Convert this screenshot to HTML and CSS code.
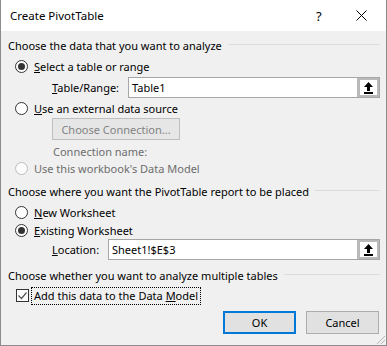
FILE: index.html
```html
<!DOCTYPE html>
<html lang="en">
<head>
    <meta charset="UTF-8">
    <title>Create PivotTable</title>
    <link rel="stylesheet" href="styles.css">
</head>
<body>

    <div class="dialog">

        <!-- Title bar -->
        <div class="titlebar">
            <span class="title">Create PivotTable</span>
            <span class="help">?</span>
            <span class="close">
                <svg width="11" height="11" viewBox="0 0 11 11"><path d="M0.5 0.5 L10.5 10.5 M10.5 0.5 L0.5 10.5" stroke="#000" stroke-width="1"/></svg>
            </span>
        </div>

        <div class="content">

            <!-- Source -->
            <div class="group-title g1">Choose the data that you want to analyze</div>

            <div class="option r1">
                <span class="radio checked"></span>
                <span><u>S</u>elect a table or range</span>
            </div>

            <div class="field f1">
                <span class="label"><u>T</u>able/Range:</span>
                <div class="input">
                    <span class="value">Table1</span>
                    <span class="picker">
                        <svg width="11" height="12" viewBox="0 0 11 12"><path d="M5.5 0 L10 5 L7 5 L7 9 L4 9 L4 5 L1 5 Z" fill="#000"/><rect x="1" y="10" width="9" height="2" fill="#000"/></svg>
                    </span>
                </div>
            </div>

            <div class="option r2">
                <span class="radio"></span>
                <span><u>U</u>se an external data source</span>
            </div>

            <div class="connect-row">
                <span class="btn disabled">Choose Connection...</span>
            </div>

            <div class="conn-name">Connection name:</div>

            <div class="option r3 muted">
                <span class="radio disabled"></span>
                <span>Use this workbook's Data Model</span>
            </div>

            <!-- Destination -->
            <div class="group-title g2">Choose where you want the PivotTable report to be placed</div>

            <div class="option r4">
                <span class="radio"></span>
                <span><u>N</u>ew Worksheet</span>
            </div>

            <div class="option r5">
                <span class="radio checked"></span>
                <span><u>E</u>xisting Worksheet</span>
            </div>

            <div class="field f2">
                <span class="label"><u>L</u>ocation:</span>
                <div class="input">
                    <span class="value">Sheet1!$E$3</span>
                    <span class="picker">
                        <svg width="11" height="12" viewBox="0 0 11 12"><path d="M5.5 0 L10 5 L7 5 L7 9 L4 9 L4 5 L1 5 Z" fill="#000"/><rect x="1" y="10" width="9" height="2" fill="#000"/></svg>
                    </span>
                </div>
            </div>

            <!-- Multiple tables -->
            <div class="group-title g3">Choose whether you want to analyze multiple tables</div>

            <div class="option r6">
                <span class="checkbox">
                    <svg width="11" height="11" viewBox="0 0 11 11"><path d="M1.5 5.5 L4.5 8.5 L9.5 2.5" fill="none" stroke="#555" stroke-width="1.2"/></svg>
                </span>
                <span class="focus">Add this data to the Data <u>M</u>odel</span>
            </div>

            <div class="actions">
                <span class="btn default">OK</span>
                <span class="btn">Cancel</span>
            </div>
        </div>

        <div class="grip"></div>
    </div>

</body>
</html>
```

FILE: styles.css
```css
* {
    margin: 0;
    padding: 0;
    box-sizing: border-box;
}

body {
    background: #f0f0f0;
    font-family: "Noto Sans", sans-serif;
    font-size: 11px;
    color: #000;
}

.dialog {
    position: relative;
    width: 387px;
    height: 346px;
    border: 1px solid #8c8c8c;
    border-top: none;
    background: #f0f0f0;
    display: flex;
    flex-direction: column;
}

/* Title bar */
.titlebar {
    height: 31px;
    background: #fff;
    display: flex;
    align-items: center;
    padding-left: 9px;
}

.title {
    flex-grow: 1;
    font-size: 11.5px;
}

.help {
    width: 10px;
    margin-right: 30px;
    font-size: 13px;
}

.close {
    width: 11px;
    height: 11px;
    margin-right: 19px;
    display: flex;
}

/* Content */
.content {
    padding: 0 6px 0 7px;
    display: flex;
    flex-direction: column;
}

.group-title {
    height: 18px;
    display: flex;
    align-items: center;
    gap: 6px;
}

.group-title::after {
    content: "";
    flex-grow: 1;
    height: 1px;
    margin-top: -2px;
    background: #dcdcdc;
}

.g1 { margin-top: 5px; }
.g2 { margin-top: 5px; }
.g3 { margin-top: 6px; }

.option {
    height: 18px;
    display: flex;
    align-items: center;
    gap: 6px;
    padding-left: 7px;
}

.r1 { margin-top: 3px; }
.r2 { margin-top: 1px; }
.r3 { height: 17px; }
.r4 { margin-top: 3px; }
.r5 { margin-top: 1px; height: 17px; }
.r6 { margin-top: 3px; height: 17px; padding-left: 8px; }

.muted {
    color: #6d6d6d;
}

.radio {
    width: 13px;
    height: 13px;
    border: 1px solid #333;
    border-radius: 50%;
    background: #fff;
    display: flex;
    align-items: center;
    justify-content: center;
}

.radio.checked::after {
    content: "";
    width: 7px;
    height: 7px;
    border-radius: 50%;
    background: #333;
}

.radio.disabled {
    border-color: #bcbcbc;
    background: #fcfcfc;
}

.checkbox {
    width: 13px;
    height: 13px;
    border: 1px solid #333;
    background: #fff;
    display: flex;
    align-items: center;
    justify-content: center;
}

.focus {
    outline: 1px dotted #000;
    padding: 0 2px 1px 2px;
    margin-left: -3px;
}

/* Input rows */
.field {
    display: flex;
    align-items: center;
    padding-left: 44px;
}

.f1 { margin-top: 2px; }
.f1 .label { width: 76px; }
.f2 .label { width: 56px; }

.input {
    flex-grow: 1;
    height: 21px;
    border: 1px solid #a6a6a6;
    background: #fff;
    display: flex;
    align-items: stretch;
}

.value {
    flex-grow: 1;
    padding-left: 3px;
    display: flex;
    align-items: center;
}

.picker {
    width: 22px;
    border: 3px solid #b9b9b9;
    border-right-width: 2px;
    border-top-width: 2px;
    border-bottom-width: 2px;
    display: flex;
    align-items: center;
    justify-content: center;
}

.connect-row {
    margin-top: 1px;
    padding-left: 44px;
    display: flex;
}

.conn-name {
    margin-top: 3px;
    height: 17px;
    padding-left: 45px;
    color: #6d6d6d;
    display: flex;
    align-items: center;
}

/* Buttons */
.btn {
    width: 73px;
    height: 23px;
    border: 1px solid #adadad;
    background: #e1e1e1;
    display: flex;
    align-items: center;
    justify-content: center;
}

.btn.disabled {
    width: 128px;
    height: 22px;
    border-color: #bfbfbf;
    background: #e6e6e6;
    color: #838383;
}

.btn.default {
    border: 2px solid #0078d7;
}

.actions {
    margin-top: 7px;
    display: flex;
    justify-content: flex-end;
    gap: 10px;
    padding-right: 1px;
}

/* Resize grip */
.grip {
    position: absolute;
    right: 1px;
    bottom: 1px;
    width: 10px;
    height: 10px;
    background: linear-gradient(135deg, transparent 55%, #b8b8b8 55%, #b8b8b8 62%, transparent 62%, transparent 75%, #b8b8b8 75%, #b8b8b8 82%, transparent 82%);
}
```
